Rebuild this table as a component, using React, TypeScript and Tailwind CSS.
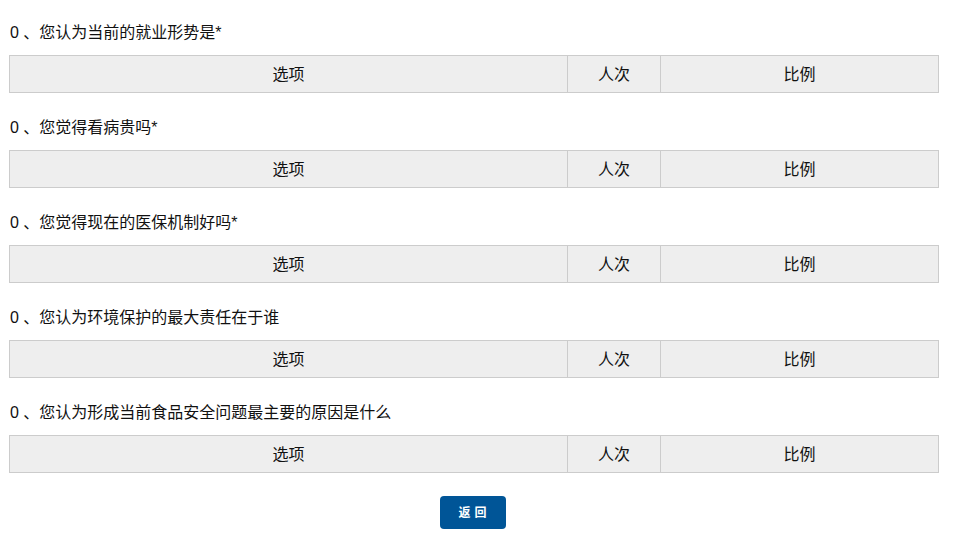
import React from 'react';

const questions = [
  '您认为当前的就业形势是*',
  '您觉得看病贵吗*',
  '您觉得现在的医保机制好吗*',
  '您认为环境保护的最大责任在于谁',
  '您认为形成当前食品安全问题最主要的原因是什么',
];

const App: React.FC = () => {
  return (
    <div className="min-h-screen bg-white px-[9px] pt-[15px] text-[#111] font-['Liberation_Sans','Noto_Sans_CJK_SC',sans-serif]">
      {questions.map((q, i) => (
        <div key={i} className="mb-[17px]">
          <p className="h-[36px] pl-px text-[16px] leading-[36px]">0 、{q}</p>
          <table className="mt-[4px] w-[930px] border-collapse text-[16px]">
            <thead>
              <tr className="h-[37px] bg-[#eeeeee]">
                <th className="w-[558px] border border-[#cccccc] p-0 pt-px font-normal">选项</th>
                <th className="w-[93px] border border-[#cccccc] p-0 pt-px font-normal">人次</th>
                <th className="border border-[#cccccc] p-0 pt-px font-normal">比例</th>
              </tr>
            </thead>
          </table>
        </div>
      ))}
      <div className="flex w-[930px] justify-center pt-[6px]">
        <button className="mr-[3px] h-[33px] w-[66px] rounded-[4px] bg-[#005597] pl-[4px] text-[12px] font-bold tracking-[4px] text-white">
          返回
        </button>
      </div>
    </div>
  );
};

export default App;
